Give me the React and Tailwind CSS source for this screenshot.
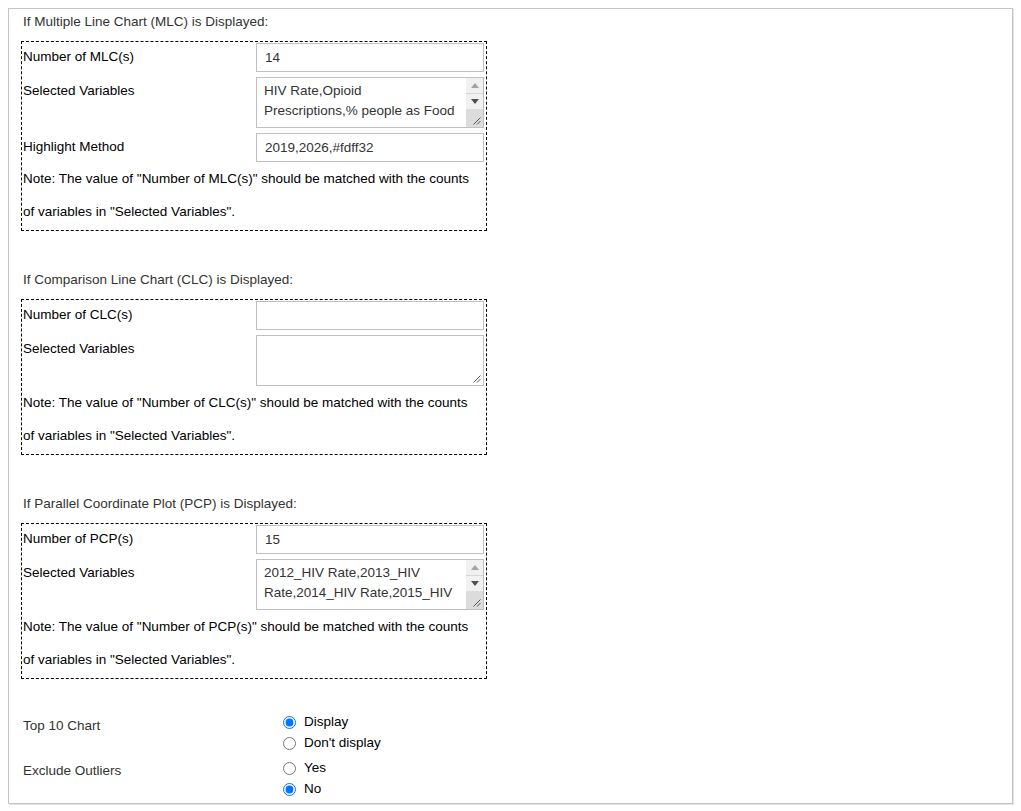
import React from "react";

function Grip() {
  return (
    <svg className="absolute right-[2px] bottom-[2px]" width="10" height="10" viewBox="0 0 10 10">
      <line x1="9.5" y1="2.5" x2="2.5" y2="9.5" stroke="#555" strokeWidth="1" />
      <line x1="9.5" y1="6" x2="6" y2="9.5" stroke="#555" strokeWidth="1" />
    </svg>
  );
}

function FakeTextarea({ lines }) {
  const scroll = lines && lines.length > 0;
  return (
    <div className="relative flex h-[51px] w-[228px] border border-[#c0c0c0] bg-white">
      <div className="flex-1 overflow-hidden whitespace-nowrap pl-[7px] pr-[2px] pt-[3px] text-[13.5px] leading-[20px] text-[#333]">
        {scroll &&
          lines.map((l, i) => (
            <div key={i}>{l}</div>
          ))}
      </div>
      {scroll && (
        <div className="flex w-[17px] flex-col bg-[#f1f1f1]">
          <div className="flex h-[16px] items-center justify-center border-b border-[#d6d6d6]">
            <svg width="8" height="5" viewBox="0 0 8 5">
              <path d="M0 5 L4 0 L8 5 Z" fill="#a3a3a3" />
            </svg>
          </div>
          <div className="flex h-[15px] items-center justify-center">
            <svg width="8" height="5" viewBox="0 0 8 5">
              <path d="M0 0 L8 0 L4 5 Z" fill="#505050" />
            </svg>
          </div>
          <div className="relative flex-1 bg-[#dcdcdc]">
            <Grip />
          </div>
        </div>
      )}
      {!scroll && <Grip />}
    </div>
  );
}

function TextInput({ value }) {
  return (
    <input
      readOnly
      value={value}
      className="box-border h-[29px] w-[228px] border border-[#c0c0c0] bg-white px-[8px] text-[13.5px] text-[#333] outline-none"
    />
  );
}

function Label({ children }) {
  return <div className="pt-[5px] text-[13.5px] leading-[17px] text-black">{children}</div>;
}

function Section({ title, rows, noteName }) {
  return (
    <div>
      <div className="pl-[2px] text-[13.5px] leading-[20px] text-[#333]">{title}</div>
      <div className="mt-[9px] w-[466px] border border-dashed border-black p-px">
        <div className="grid grid-cols-[233px_228px] gap-y-[5px]">
          {rows.map((r, i) => (
            <React.Fragment key={i}>
              <Label>{r.label}</Label>
              {r.type === "input" ? <TextInput value={r.value} /> : <FakeTextarea lines={r.lines} />}
            </React.Fragment>
          ))}
        </div>
        <div className="whitespace-nowrap pb-px text-[13.5px] leading-[33px] text-black">
          <div>Note: The value of "{noteName}" should be matched with the counts</div>
          <div>of variables in "Selected Variables".</div>
        </div>
      </div>
    </div>
  );
}

function Radio({ checked, label, name }) {
  return (
    <label className="flex h-[21px] items-center">
      <input
        type="radio"
        name={name}
        defaultChecked={checked}
        className="m-0 h-[13px] w-[13px] accent-[#0075ff]"
      />
      <span className="ml-[8px] text-[13.5px] text-black">{label}</span>
    </label>
  );
}

export default function App() {
  return (
    <div className="p-2 font-['Liberation_Sans',Arial,sans-serif]">
      <div className="box-border w-[1005px] border border-[#c4c4c4] px-3 pb-[3px] pt-[3px] shadow-[1px_1px_0_#e4e4e4]">
        <Section
          title="If Multiple Line Chart (MLC) is Displayed:"
          noteName="Number of MLC(s)"
          rows={[
            { label: "Number of MLC(s)", type: "input", value: "14" },
            { label: "Selected Variables", type: "textarea", lines: ["HIV Rate,Opioid", "Prescriptions,% people as Food"] },
            { label: "Highlight Method", type: "input", value: "2019,2026,#fdff32" },
          ]}
        />
        <div className="mt-[39px]">
          <Section
            title="If Comparison Line Chart (CLC) is Displayed:"
            noteName="Number of CLC(s)"
            rows={[
              { label: "Number of CLC(s)", type: "input", value: "" },
              { label: "Selected Variables", type: "textarea", lines: [] },
            ]}
          />
        </div>
        <div className="mt-[39px]">
          <Section
            title="If Parallel Coordinate Plot (PCP) is Displayed:"
            noteName="Number of PCP(s)"
            rows={[
              { label: "Number of PCP(s)", type: "input", value: "15" },
              { label: "Selected Variables", type: "textarea", lines: ["2012_HIV Rate,2013_HIV", "Rate,2014_HIV Rate,2015_HIV"] },
            ]}
          />
        </div>
        <div className="mt-[33px] grid grid-cols-[262px_1fr] gap-y-[4px]">
          <div className="pl-[2px] pt-[4px] text-[13.5px] leading-[20px] text-[#333]">Top 10 Chart</div>
          <div>
            <Radio name="top10" checked label="Display" />
            <Radio name="top10" label="Don't display" />
          </div>
          <div className="pl-[2px] pt-[3px] text-[13.5px] leading-[20px] text-[#333]">Exclude Outliers</div>
          <div>
            <Radio name="outliers" label="Yes" />
            <Radio name="outliers" checked label="No" />
          </div>
        </div>
      </div>
    </div>
  );
}
